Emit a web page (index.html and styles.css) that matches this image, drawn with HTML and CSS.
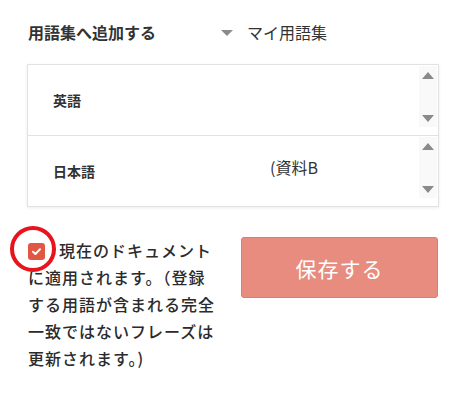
FILE: index.html
```html
<!DOCTYPE html>
<html lang="ja">
<head>
<meta charset="utf-8">
<link rel="stylesheet" href="styles.css">
</head>
<body>
<div class="page">
  <div class="header">
    <div class="title">用語集へ追加する</div>
    <div class="select">
      <span class="caret"></span>
      <span class="select-text">マイ用語集</span>
    </div>
  </div>

  <div class="box">
    <div class="row">
      <div class="label">英語</div>
      <div class="value"></div>
      <div class="spin"><span class="up"></span><span class="down"></span></div>
    </div>
    <div class="row row-divided">
      <div class="label">日本語</div>
      <div class="value"><span class="value-text">(資料B</span></div>
      <div class="spin"><span class="up"></span><span class="down"></span></div>
    </div>
  </div>

  <div class="bottom">
    <div class="note-col">
      <div class="note">
        <span class="checkbox"><svg viewBox="0 0 17 17" width="17" height="17"><path d="M5 8.8 L7.4 11 L12 6.3" fill="none" stroke="#fff" stroke-width="2" stroke-linecap="round" stroke-linejoin="round"/></svg></span>現在のドキュメントに適用されます。（登録する用語が含まれる完全一致ではないフレーズは更新されます。)
        <span class="ring"></span>
      </div>
    </div>
    <button class="save">保存する</button>
  </div>
</div>
</body>
</html>
```
FILE: styles.css
```css
html, body {
  margin: 0;
  background: #fff;
}
body {
  font-family: "Noto Sans CJK JP", "Noto Sans", sans-serif;
  color: #333;
}
.page {
  padding: 18px 22px 0 27px;
}
.header {
  display: flex;
  align-items: center;
  height: 28px;
}
.title {
  width: 193px;
  font-size: 16px;
  font-weight: bold;
  padding-left: 1px;
}
.select {
  display: flex;
  align-items: center;
}
.caret {
  width: 0;
  height: 0;
  border-left: 6px solid transparent;
  border-right: 6px solid transparent;
  border-top: 6px solid #8a8a8a;
  margin-right: 14px;
  margin-top: 1px;
}
.select-text {
  font-size: 16px;
  color: #333;
}
.box {
  margin-top: 18px;
  width: 410px;
  border: 1px solid #e2e2e2;
  box-shadow: 0 1px 3px rgba(0, 0, 0, 0.08);
}
.row {
  display: flex;
  height: 70px;
}
.row-divided {
  border-top: 1px solid #e2e2e2;
}
.label {
  width: 217px;
  padding-left: 25px;
  font-size: 14px;
  font-weight: bold;
  display: flex;
  align-items: center;
}
.value {
  flex: 1;
  display: flex;
  align-items: center;
  font-size: 16px;
}
.value-text {
  margin-top: -8px;
}
.spin {
  width: 18px;
  margin: 1px 1px 8px 0;
  background: #f9f9f9;
  display: flex;
  flex-direction: column;
  justify-content: space-between;
  align-items: center;
  padding: 6px 0 5px;
}
.up {
  width: 0;
  height: 0;
  border-left: 6.5px solid transparent;
  border-right: 6.5px solid transparent;
  border-bottom: 7px solid #8a8a8a;
}
.down {
  width: 0;
  height: 0;
  border-left: 6.5px solid transparent;
  border-right: 6.5px solid transparent;
  border-top: 7px solid #8a8a8a;
}
.bottom {
  display: flex;
  margin-top: 30px;
}
.note-col {
  width: 214px;
}
.note {
  position: relative;
  width: 190px;
  margin-left: 1px;
  font-size: 16px;
  letter-spacing: 1px;
  line-height: 27px;
  font-weight: 500;
  color: #2b2b2b;
}
.checkbox {
  display: inline-block;
  width: 17px;
  height: 17px;
  border-radius: 3px;
  background: #e05843;
  vertical-align: -3px;
  margin-right: 14px;
}
.checkbox svg {
  display: block;
}
.ring {
  position: absolute;
  left: -18px;
  top: -11px;
  width: 46px;
  height: 46px;
  box-sizing: border-box;
  border: 4px solid #e8141d;
  border-radius: 50%;
}
.save {
  width: 197px;
  height: 61px;
  background: #e88c80;
  border: 1px solid #e07a72;
  border-radius: 3px;
  color: #fff;
  font-family: "Noto Sans CJK JP", sans-serif;
  font-size: 21px;
  letter-spacing: 1px;
  padding: 0;
}
```
